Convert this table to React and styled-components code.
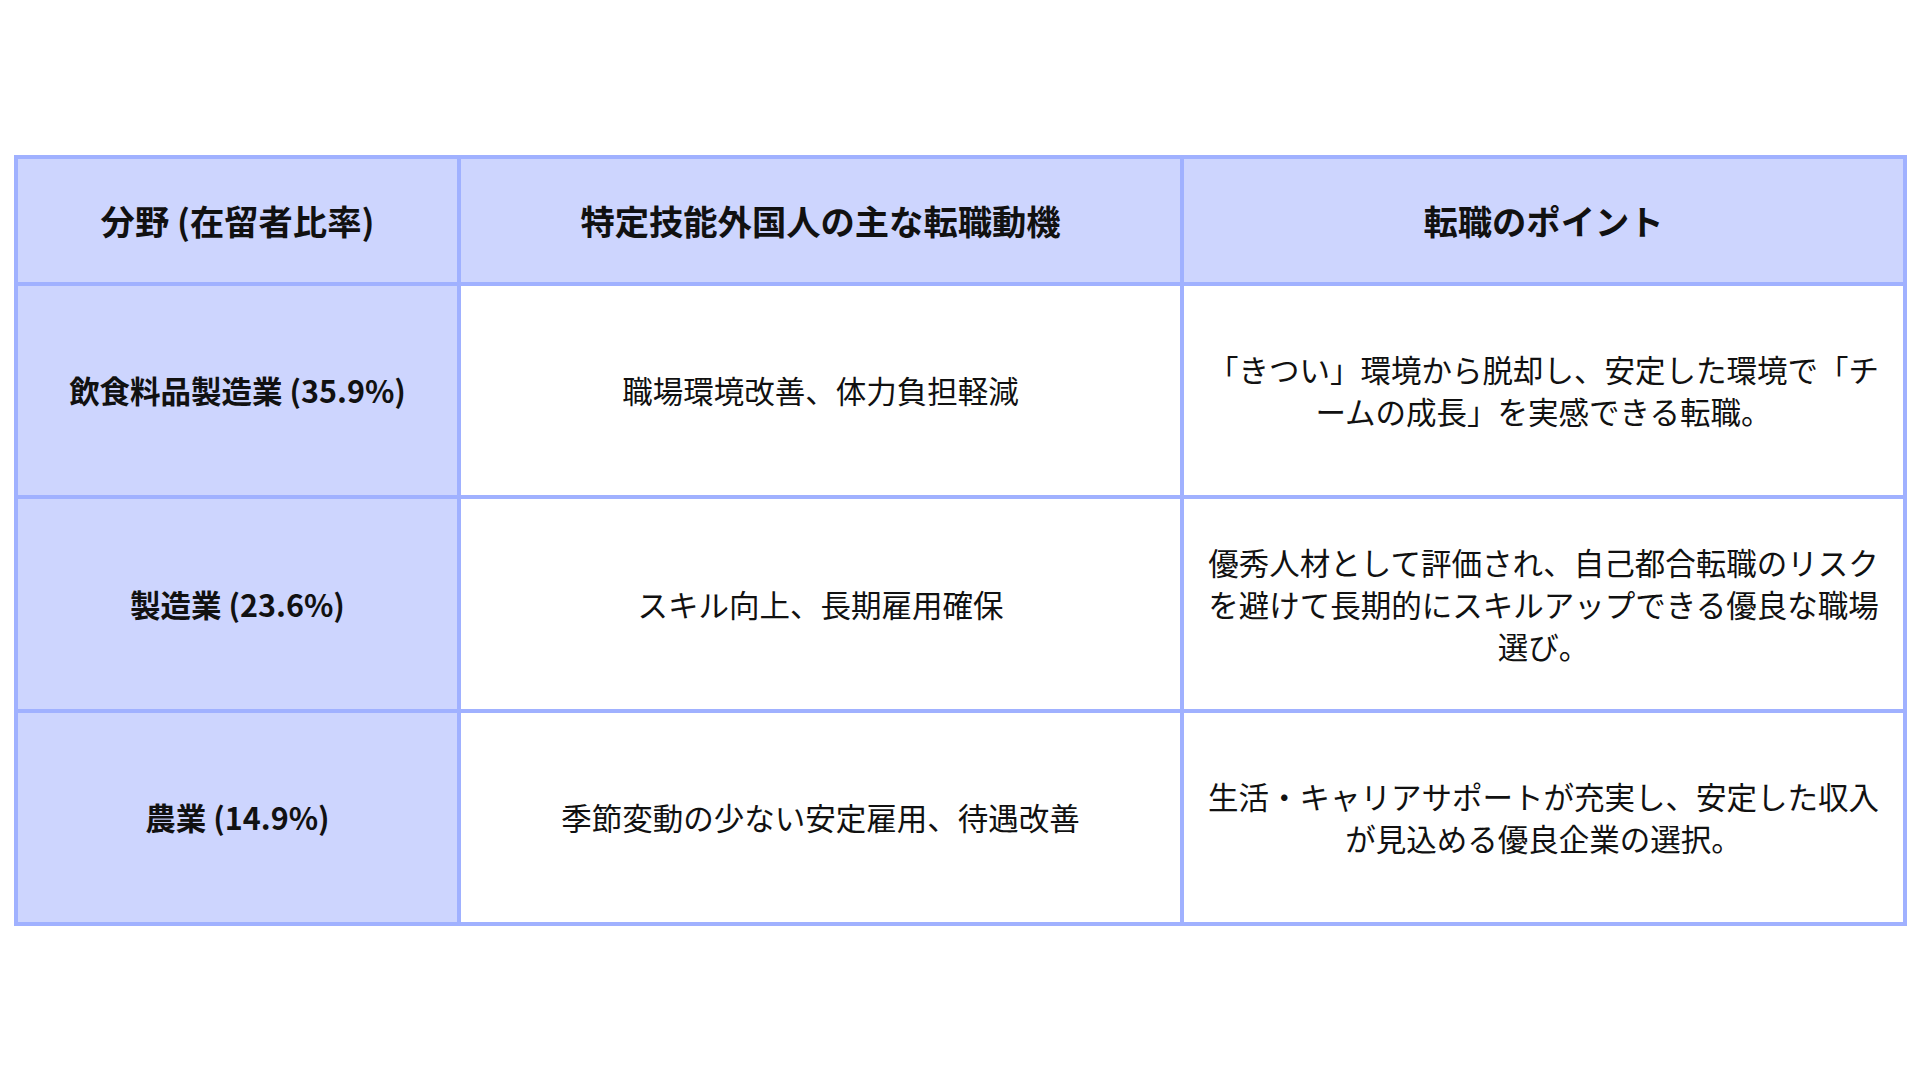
import React from 'react';
import styled, { createGlobalStyle } from 'styled-components';

const GlobalStyle = createGlobalStyle`
  html, body {
    margin: 0;
    padding: 0;
    background: #ffffff;
  }
  body {
    font-family: "Noto Sans CJK JP", "Noto Sans", sans-serif;
    color: #111111;
  }
`;

const rows = [
  {
    field: '飲食料品製造業 (35.9%)',
    motive: '職場環境改善、体力負担軽減',
    point: '「きつい」環境から脱却し、安定した環境で「チームの成長」を実感できる転職。',
  },
  {
    field: '製造業 (23.6%)',
    motive: 'スキル向上、長期雇用確保',
    point: '優秀人材として評価され、自己都合転職のリスクを避けて長期的にスキルアップできる優良な職場選び。',
  },
  {
    field: '農業 (14.9%)',
    motive: '季節変動の少ない安定雇用、待遇改善',
    point: '生活・キャリアサポートが充実し、安定した収入が見込める優良企業の選択。',
  },
];

const Page = styled.div`
  padding: 155px 16px 0 14px;
`;

const Table = styled.table`
  width: 1889px;
  border-collapse: collapse;
  table-layout: fixed;
  border: 4px solid #a0b1ff;
`;

const HeadCell = styled.th`
  height: 122.5px;
  background: #cdd5fe;
  border: 4px solid #a0b1ff;
  font-size: 34.3px;
  font-weight: 700;
  text-align: center;
  vertical-align: middle;
  padding: 0 24px;
`;

const Cell = styled.td`
  height: 209.5px;
  background: ${p => (p.$label ? '#cdd5fe' : '#ffffff')};
  border: 4px solid #a0b1ff;
  font-size: 30.5px;
  line-height: 42px;
  font-weight: ${p => (p.$label ? 700 : 400)};
  text-align: center;
  vertical-align: middle;
  padding: 0 24px;
`;

export default function App() {
  return (
    <Page>
      <GlobalStyle />
      <Table>
        <colgroup>
          <col style={{ width: 443 }} />
          <col style={{ width: 723 }} />
          <col style={{ width: 723 }} />
        </colgroup>
        <thead>
          <tr>
            <HeadCell>分野 (在留者比率)</HeadCell>
            <HeadCell>特定技能外国人の主な転職動機</HeadCell>
            <HeadCell>転職のポイント</HeadCell>
          </tr>
        </thead>
        <tbody>
          {rows.map(r => (
            <tr key={r.field}>
              <Cell $label>{r.field}</Cell>
              <Cell>{r.motive}</Cell>
              <Cell>{r.point}</Cell>
            </tr>
          ))}
        </tbody>
      </Table>
    </Page>
  );
}
